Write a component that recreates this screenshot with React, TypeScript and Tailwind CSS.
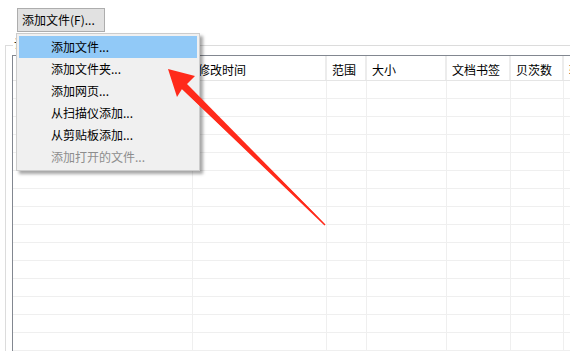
import React from "react";

const cols = [
  { w: 180, label: "" },
  { w: 134, label: "修改时间" },
  { w: 40, label: "范围" },
  { w: 80, label: "大小" },
  { w: 64, label: "文档书签" },
  { w: 53, label: "贝茨数" },
  { w: 80, label: "转" },
];

const items = [
  { t: "添加文件...", active: true },
  { t: "添加文件夹..." },
  { t: "添加网页..." },
  { t: "从扫描仪添加..." },
  { t: "从剪贴板添加..." },
  { t: "添加打开的文件...", disabled: true },
];

export default function App() {
  const rows = Array.from({ length: 15 });
  return (
    <div
      className="relative w-[570px] h-[351px] overflow-hidden bg-white text-[12px] text-black"
      style={{ fontFamily: '"Noto Sans CJK SC", "Noto Sans", sans-serif' }}
    >
      <div className="flex flex-col pt-[8px]">
        <div className="ml-[17px] flex h-[24px] w-[88px] items-center border border-[#adadad] bg-[#e1e1e1] pl-[4px] leading-none">
          添加文件(F)...
        </div>
        <div className="relative ml-[5px] mt-[13px] flex flex-col border-l border-t border-[#dcdcdc] pl-[6px] pt-[9px]">
          <div className="absolute left-[7px] top-[-8px] bg-white px-[1px] leading-none text-[#333]">访问列表</div>
          <div className="flex flex-col border-l border-t border-[#828790] whitespace-nowrap">
            <div className="flex h-[25px] border-b border-[#e5e5e5]">
              {cols.map((c, i) => (
                <div
                  key={i}
                  className="shrink-0 overflow-hidden border-r-2 border-[#ececec] pl-[5px] pt-[8px] leading-none"
                  style={{ width: c.w }}
                >
                  {c.label}
                </div>
              ))}
            </div>
            {rows.map((_, r) => (
              <div key={r} className="flex h-[18px] border-b border-[#efefef]">
                {cols.map((c, i) => (
                  <div key={i} className="shrink-0 border-r border-[#efefef]" style={{ width: c.w }} />
                ))}
              </div>
            ))}
          </div>
        </div>
      </div>

      <div className="absolute left-[16px] top-[33px] w-[184px] border border-[#cccccc] bg-[#f0f0f0] p-[2px] shadow-[3px_3px_3px_rgba(0,0,0,0.35)]">
        {items.map((it, i) => (
          <div
            key={i}
            className={`flex h-[22px] items-center pl-[32px] leading-none ${
              it.active ? "bg-[#91c9f7]" : ""
            } ${it.disabled ? "text-[#8d8d8d]" : "text-black"}`}
          >
            {it.t}
          </div>
        ))}
      </div>

      <svg className="pointer-events-none absolute left-0 top-0" width="570" height="351" viewBox="0 0 570 351">
        <polygon
          points="168,69 195,76 186,85 325.5,224.5 324.5,225.5 182,89 177,97"
          fill="#ff2a1a"
        />
        <polygon points="185,82 189,86 325.5,224.5 182,89" fill="#ff2a1a" />
      </svg>
    </div>
  );
}
